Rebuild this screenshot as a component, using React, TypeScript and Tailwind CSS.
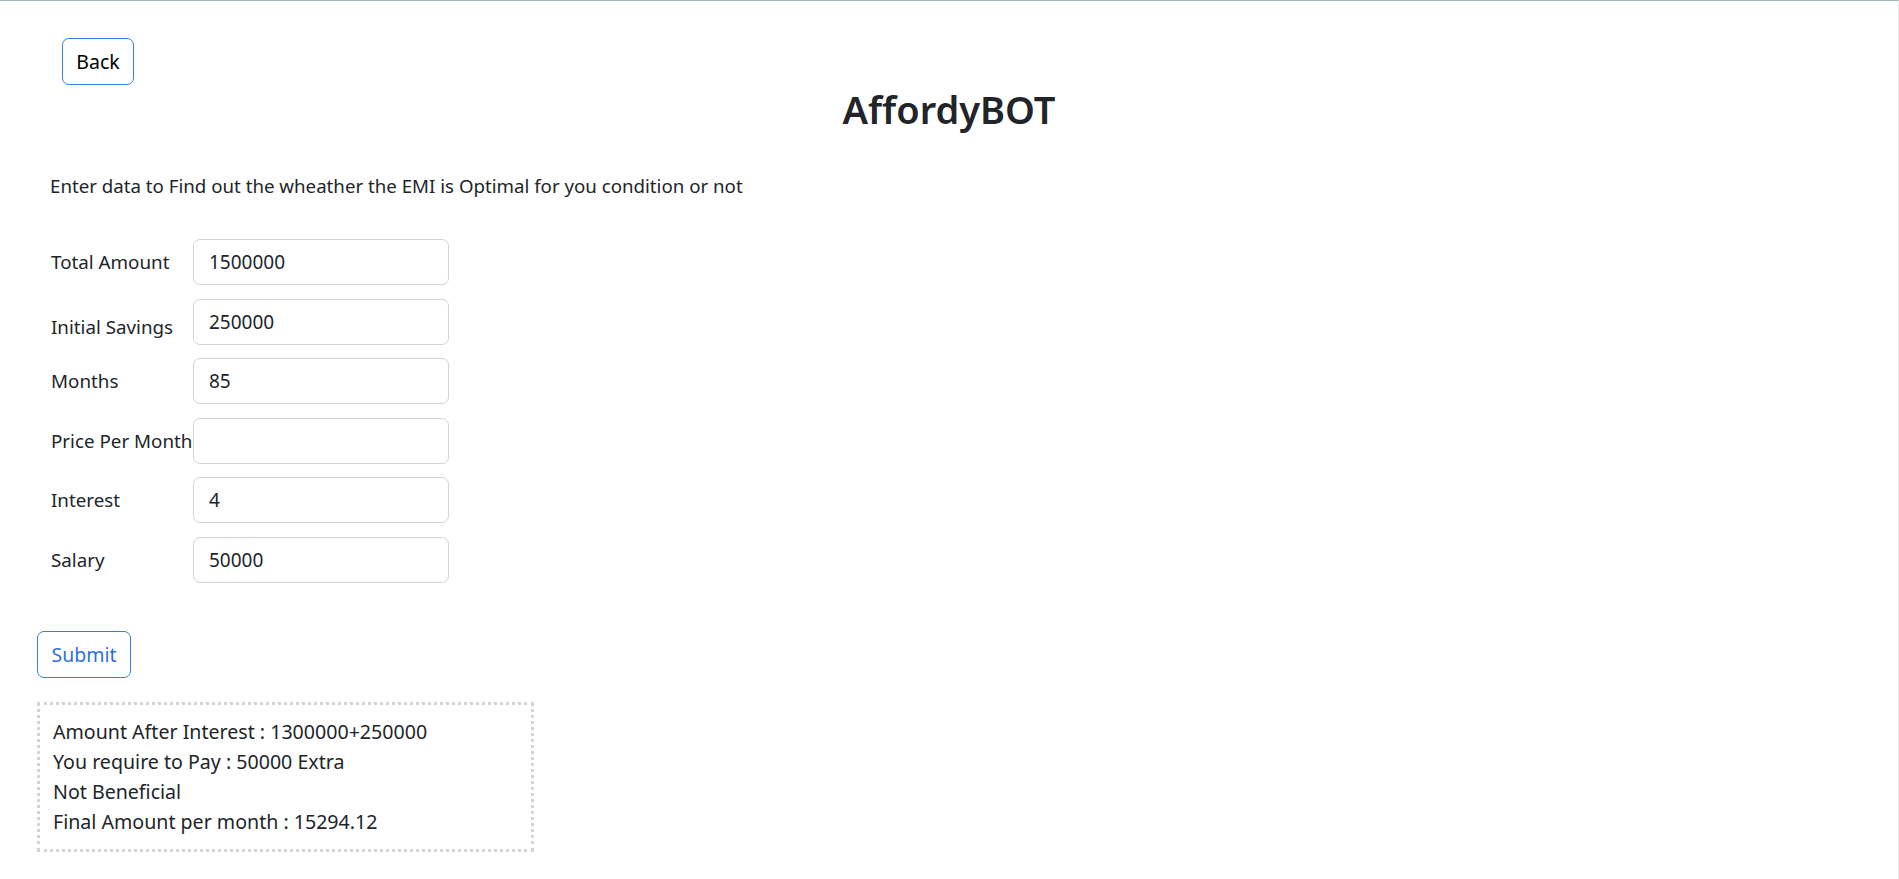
import React from 'react';

const fields = [
  { label: 'Total Amount', value: '1500000', shift: '' },
  { label: 'Initial Savings', value: '250000', shift: 'pt-[11px]' },
  { label: 'Months', value: '85', shift: '' },
  { label: 'Price Per Month', value: '', shift: '' },
  { label: 'Interest', value: '4', shift: '' },
  { label: 'Salary', value: '50000', shift: '' },
];

export default function App() {
  return (
    <div className="min-h-screen bg-white border-t border-t-[#9fb3b8] border-r border-r-[#e3e6e8] text-[#212529] font-['Noto_Sans',sans-serif]">
      <div className="pl-[62px] pt-[37px]">
        <button className="h-[47px] w-[72px] rounded-[7px] border border-[#3b7ddd] text-[19.5px] text-black">
          Back
        </button>
      </div>

      <h1 className="mt-0 text-center text-[38px] font-semibold leading-[48px]">AffordyBOT</h1>

      <p className="mt-[38px] pl-[50px] text-[18.7px] leading-[30px]">
        Enter data to Find out the wheather the EMI is Optimal for you condition or not
      </p>

      <div className="mt-[38px] pl-[51px] flex flex-col gap-[13.6px]">
        {fields.map((f) => (
          <div key={f.label} className="flex items-center h-[46px]">
            <label className={`w-[142px] shrink-0 text-[18.8px] whitespace-nowrap ${f.shift}`}>{f.label}</label>
            <input
              type="text"
              defaultValue={f.value}
              className="h-[46px] w-[256px] rounded-[7px] border border-[#ced4da] px-[15px] text-[19px] text-[#212529] outline-none"
            />
          </div>
        ))}
      </div>

      <div className="pl-[37px] mt-[48px]">
        <button className="h-[47px] w-[94px] rounded-[7px] border border-[#3b7ddd] text-[19.5px] text-[#2f6fd6]">
          Submit
        </button>
      </div>

      <div className="ml-[37px] mt-[24px] w-[497px] border-[3px] border-dotted border-[#d4d4d4] px-[13px] py-[12px] text-[19.6px] leading-[30px]">
        <div>Amount After Interest : 1300000+250000</div>
        <div>You require to Pay : 50000 Extra</div>
        <div>Not Beneficial</div>
        <div>Final Amount per month : 15294.12</div>
      </div>
    </div>
  );
}
